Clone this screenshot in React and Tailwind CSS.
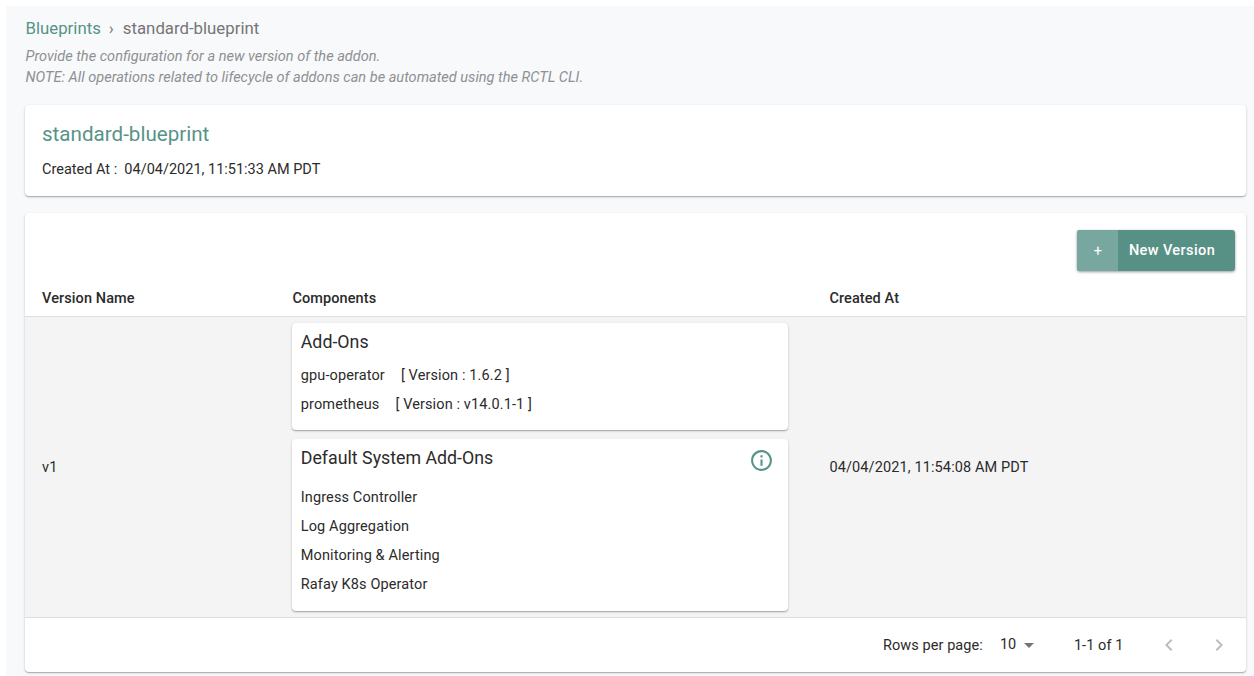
import React from "react";

const systemAddons = [
  "Ingress Controller",
  "Log Aggregation",
  "Monitoring & Alerting",
  "Rafay K8s Operator",
];

const addons = [
  { name: "gpu-operator", version: "1.6.2" },
  { name: "prometheus", version: "v14.0.1-1" },
];

const Card = ({ className = "", children }) => (
  <div
    className={`bg-white rounded-[4px] shadow-[0_1px_1px_rgba(0,0,0,0.22),0_1px_3px_rgba(0,0,0,0.16)] ${className}`}
  >
    {children}
  </div>
);

const Header = () => (
  <div className="pl-[19.5px] pt-[12px] h-[99px]">
    <div className="flex items-center text-[16.8px] leading-[20px] text-[#757575]">
      <a className="text-[#579388]">Blueprints</a>
      <span className="ml-[8px] mr-[9px]">›</span>
      <span>standard-blueprint</span>
    </div>
    <div className="mt-[8px] text-[14.55px] leading-[21px] italic text-[#8e9093]">
      <p>Provide the configuration for a new version of the addon.</p>
      <p>
        NOTE: All operations related to lifecycle of addons can be automated
        using the RCTL CLI.
      </p>
    </div>
  </div>
);

const NewVersionButton = () => (
  <button className="flex h-[41px] w-[158px] rounded-[3px] overflow-hidden bg-[#579186] text-white text-[14.5px] font-medium shadow-[0_1px_3px_rgba(0,0,0,0.4)]">
    <span className="w-[41px] h-full flex items-center justify-center pt-[2px] bg-[#78a7a0] font-normal">
      +
    </span>
    <span className="pl-[10.5px] h-full flex items-center tracking-[0.4px]">
      New Version
    </span>
  </button>
);

const Pagination = () => (
  <div className="flex items-center h-[54px] text-[14.5px] tracking-[0.08px]">
    <span className="ml-[857.5px] w-[117px] pt-px">Rows per page:</span>
    <span className="w-[24px]">10</span>
    <svg className="w-[10px] h-[5px]" viewBox="0 0 10 5" fill="#757575">
      <path d="M0 0l5 5 5-5z" />
    </svg>
    <span className="ml-[40px] w-[83px] pt-px">1-1 of 1</span>
    <svg className="w-[24px] h-[24px]" viewBox="0 0 24 24" fill="#bdbdbd">
      <path d="M15.41 7.41L14 6l-6 6 6 6 1.41-1.41L10.83 12z" />
    </svg>
    <svg className="ml-[26px] w-[24px] h-[24px]" viewBox="0 0 24 24" fill="#bdbdbd">
      <path d="M10 6L8.59 7.41 13.17 12l-4.58 4.59L10 18l6-6z" />
    </svg>
  </div>
);

const App = () => (
  <div className="h-[676px] overflow-hidden bg-white pl-[6px] pt-[6px] font-['Roboto',sans-serif] text-[#2b2b2b]">
    <div className="h-[670px] bg-[#f8f9fb]">
      <Header />

      <Card className="ml-[19.4px] mr-[8px] h-[91px] pl-[16.6px] pt-[16px]">
        <h1 className="text-[20.6px] leading-[26px] text-[#579388]">
          standard-blueprint
        </h1>
        <p className="mt-[12px] text-[14.5px] leading-[22px]">
          Created At :&nbsp; 04/04/2021, 11:51:33 AM PDT
        </p>
      </Card>

      <Card className="ml-[19.4px] mr-[8px] mt-[17px] h-[459px]">
        <div className="flex justify-end pt-[17px] pr-[10.6px] h-[67px]">
          <NewVersionButton />
        </div>

        {/* Table */}
        <div className="grid grid-cols-[250.4px_537px_1fr] h-[37px] pl-[16.6px] pt-[9px] border-b border-[#dedede] text-[14.5px] leading-[20px] font-medium tracking-[0.1px]">
          <div>Version Name</div>
          <div>Components</div>
          <div>Created At</div>
        </div>
        <div className="grid grid-cols-[250.4px_537px_1fr] items-center h-[301px] pl-[16.6px] border-b border-[#dedede] bg-[#f4f4f4] text-[14.5px] tracking-[0.12px]">
          <div className="pt-px">v1</div>
          <div className="w-[496px]">
            <Card className="h-[107px] pl-[8.4px] pt-[7px]">
              <h2 className="text-[17.8px] leading-[24px] tracking-normal">
                Add-Ons
              </h2>
              <div className="mt-[7px]">
                {addons.map((addon) => (
                  <div key={addon.name} className="flex h-[29px] items-center">
                    <span className="mr-[16px]">{addon.name}</span>
                    <span>[ Version : {addon.version} ]</span>
                  </div>
                ))}
              </div>
            </Card>
            <Card className="mt-[9px] h-[172px] pl-[8.4px] pr-[14.5px] pt-[7px]">
              <div className="flex justify-between">
                <h2 className="text-[17.8px] leading-[24px] tracking-normal">
                  Default System Add-Ons
                </h2>
                <svg className="mt-[2px] w-[25px] h-[25px]" viewBox="0 0 24 24" fill="#579388">
                  <path d="M11 17h2v-6h-2v6zm1-15C6.48 2 2 6.48 2 12s4.48 10 10 10 10-4.48 10-10S17.52 2 12 2zm0 18c-4.41 0-8-3.59-8-8s3.59-8 8-8 8 3.59 8 8-3.59 8-8 8zM11 9h2V7h-2v2z" />
                </svg>
              </div>
              <div className="mt-[10px]">
                {systemAddons.map((name) => (
                  <div key={name} className="flex h-[29px] items-center">
                    {name}
                  </div>
                ))}
              </div>
            </Card>
          </div>
          <div className="pt-px">04/04/2021, 11:54:08 AM PDT</div>
        </div>

        <Pagination />
      </Card>
    </div>
  </div>
);

export default App;
